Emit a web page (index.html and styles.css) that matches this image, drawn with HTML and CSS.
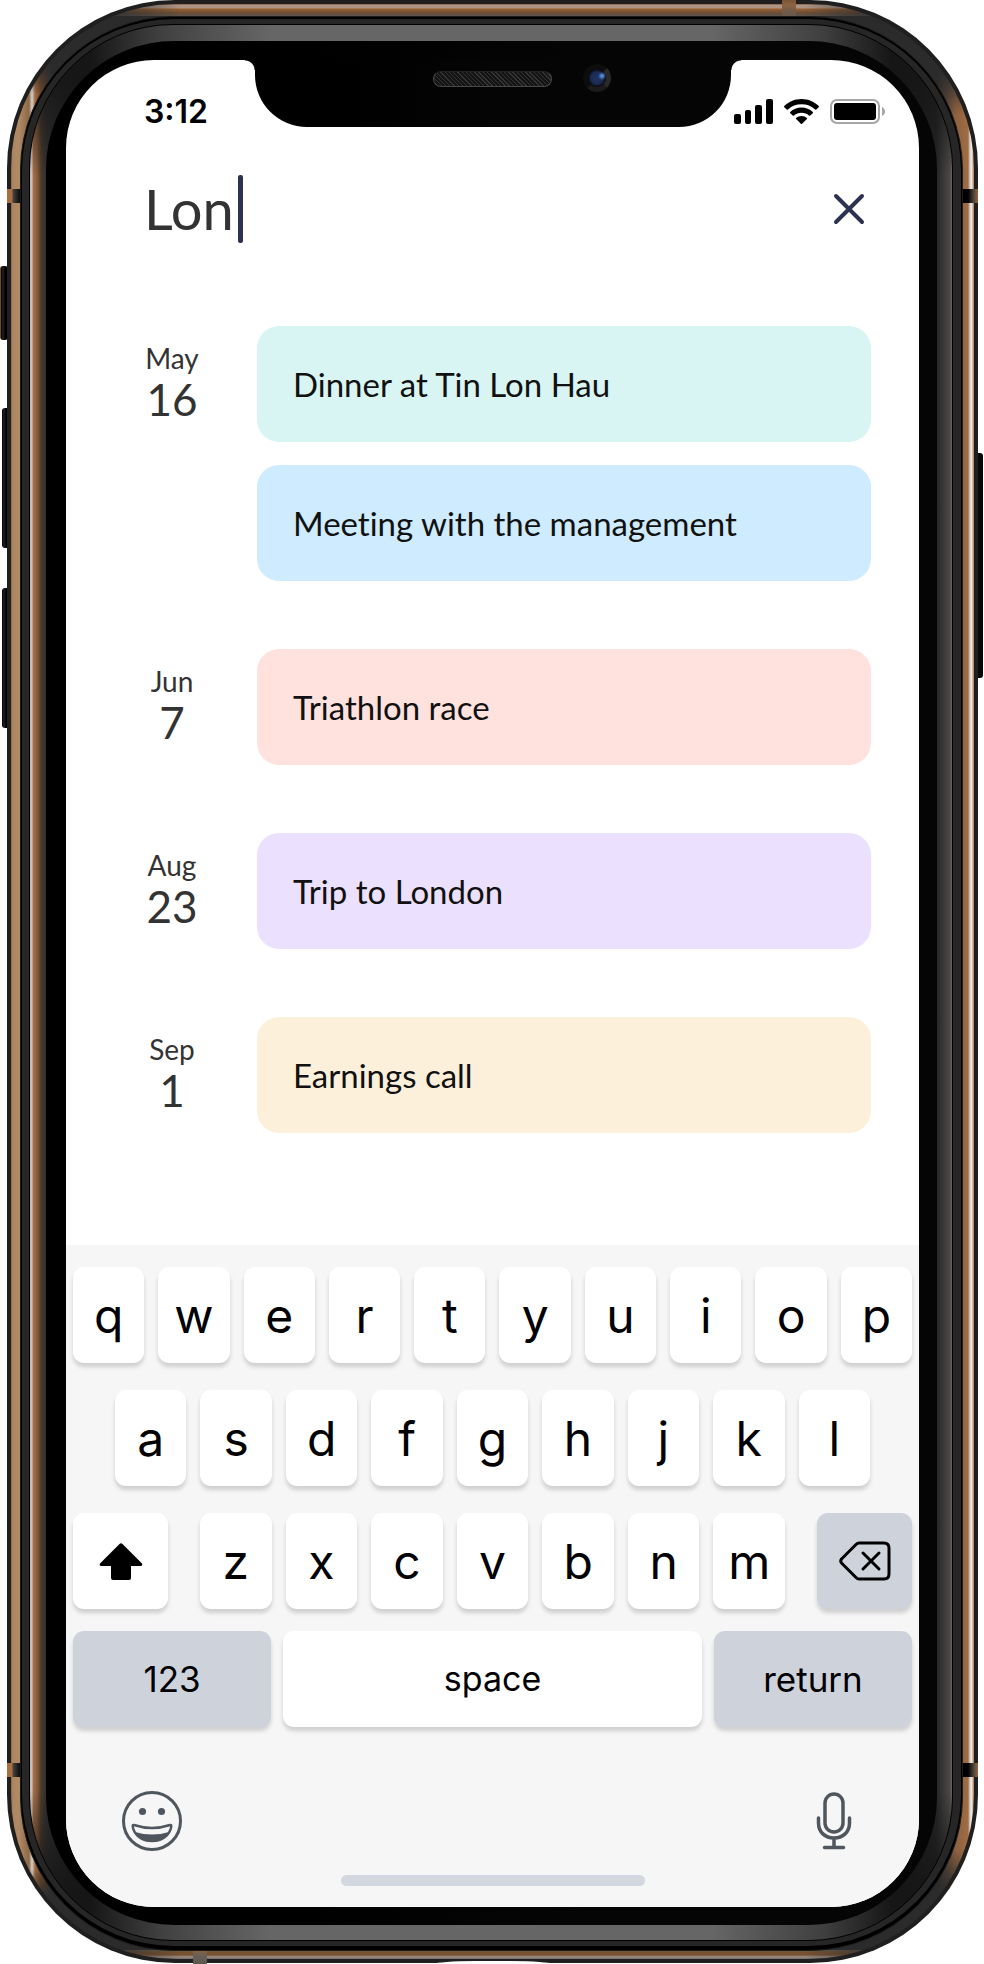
FILE: index.html
```
<!DOCTYPE html>
<html lang="en">
<head>
<meta charset="utf-8">
<meta name="viewport" content="width=device-width, initial-scale=1">
<title>Event search</title>
<link rel="stylesheet" href="styles.css">
</head>
<body>
<div class="phone">
  <div class="shell" aria-hidden="true">
    <span class="side-button mute"></span>
    <span class="side-button volume-up"></span>
    <span class="side-button volume-down"></span>
    <span class="side-button power"></span>
    <span class="ring edge"></span>
    <span class="ring metal"></span>
    <span class="band left upper"></span>
    <span class="band left lower"></span>
    <span class="band right upper"></span>
    <span class="band right lower"></span>
    <span class="band top"></span>
    <span class="band bottom"></span>
    <span class="ring gasket"></span>
    <span class="ring gasket-inner"></span>
    <span class="ring bevel"></span>
    <span class="ring glass"></span>
    <span class="port"></span>
  </div>

  <div class="screen">
    <header class="status">
      <time class="clock">3:12</time>
      <div class="notch">
        <span class="speaker"></span>
        <span class="camera"></span>
      </div>
      <div class="indicators">
        <svg width="39" height="25" viewBox="0 0 39 25" aria-label="Signal"><rect x="0" y="15" width="7" height="10" rx="2"/><rect x="11" y="11" width="6" height="14" rx="2"/><rect x="21" y="6" width="7" height="19" rx="2"/><rect x="32" y="0" width="7" height="25" rx="2"/></svg>
        <svg width="35" height="25" viewBox="0 0 35 25" aria-label="Wi-Fi"><path d="M17.500 0C24.500 0 30.500 2.800 34.700 7.100Q35.200 7.700 34.700 8.300L32.300 10.400Q31.700 10.900 31.100 10.400C27.500 7 22.800 5.200 17.500 5.200S7.500 7 3.900 10.400Q3.300 10.900 2.700 10.400L.3 8.300Q-.2 7.700 .3 7.100C4.500 2.800 10.500 0 17.500 0Z"/><path d="M17.500 8.600C22 8.600 25.800 10.200 28.800 13Q29.300 13.600 28.800 14.200L26.200 16.500Q25.600 17 25 16.500C22.900 14.700 20.400 13.700 17.500 13.700S12.100 14.700 10 16.500Q9.400 17 8.800 16.500L6.200 14.200Q5.700 13.600 6.200 13C9.200 10.200 13 8.600 17.500 8.600Z"/><path d="M17.500 17C19.700 17 21.500 17.700 22.900 19Q23.400 19.500 22.900 20.100L18.100 24.700Q17.500 25.200 16.900 24.700L12.100 20.100Q11.600 19.500 12.100 19C13.500 17.700 15.300 17 17.500 17Z"/></svg>
        <svg width="56" height="25" viewBox="0 0 56 25" aria-label="Battery"><rect x="1" y="1" width="48" height="23" rx="6" fill="none" stroke="#a6a6a6" stroke-width="2"/><rect x="4" y="4" width="42" height="17" rx="3"/><path d="M52 8Q55 9.500 55 12.500T52 17Z" fill="#a6a6a6"/></svg>
      </div>
    </header>

    <form class="search" onsubmit="return false">
      <input class="query" type="text" value="Lon" aria-label="Search events">
      <span class="caret"></span>
      <button class="clear" type="button" aria-label="Clear search">
        <svg width="32" height="32" viewBox="0 0 32 32"><path d="M3 3L29 29M29 3L3 29"/></svg>
      </button>
    </form>

    <main class="results">
      <section class="day">
        <time class="date"><span class="month">May</span><span class="number">16</span></time>
        <div class="events">
          <article class="event mint">Dinner at Tin Lon Hau</article>
          <article class="event sky">Meeting with the management</article>
        </div>
      </section>
      <section class="day">
        <time class="date"><span class="month">Jun</span><span class="number">7</span></time>
        <div class="events"><article class="event rose">Triathlon race</article></div>
      </section>
      <section class="day">
        <time class="date"><span class="month">Aug</span><span class="number">23</span></time>
        <div class="events"><article class="event violet">Trip to London</article></div>
      </section>
      <section class="day">
        <time class="date"><span class="month">Sep</span><span class="number">1</span></time>
        <div class="events"><article class="event sand">Earnings call</article></div>
      </section>
    </main>

    <footer class="keyboard">
      <div class="keys">
        <button class="key">q</button><button class="key">w</button><button class="key">e</button><button class="key">r</button><button class="key">t</button><button class="key">y</button><button class="key">u</button><button class="key">i</button><button class="key">o</button><button class="key">p</button>
      </div>
      <div class="keys inset">
        <button class="key">a</button><button class="key">s</button><button class="key">d</button><button class="key">f</button><button class="key">g</button><button class="key">h</button><button class="key">j</button><button class="key">k</button><button class="key">l</button>
      </div>
      <div class="keys spread">
        <button class="key side" aria-label="Shift"><svg width="44" height="37" viewBox="0 0 44 37"><path d="M20.500 .9Q22 -.4 23.500 .9L43 20.500Q44 23 41.500 23H32V35Q32 37 30 37H14Q12 37 12 35V23H2.500Q0 23 1 20.500Z"/></svg></button>
        <div class="keys letters">
          <button class="key">z</button><button class="key">x</button><button class="key">c</button><button class="key">v</button><button class="key">b</button><button class="key">n</button><button class="key">m</button>
        </div>
        <button class="key side grey" aria-label="Delete"><svg width="52" height="40" viewBox="0 0 52 40" fill="none" stroke="#000" stroke-width="3" stroke-linecap="round" stroke-linejoin="round"><path d="M20 2H45Q50 2 50 7V33Q50 38 45 38H20Q18.500 38 17 36.500L2.500 22Q1 20 2.500 18L17 3.500Q18.500 2 20 2Z"/><path d="M24 12L40 28M40 12L24 28"/></svg></button>
      </div>
      <div class="keys bottom-row">
        <button class="key word grey">123</button><button class="key word space">space</button><button class="key word grey">return</button>
      </div>
      <div class="tools">
        <button class="tool" aria-label="Emoji"><svg width="60" height="60" viewBox="0 0 60 60" fill="none" stroke="#50565e" stroke-width="3"><circle cx="30" cy="30" r="28.500"/><circle cx="20.500" cy="20.500" r="3.600" fill="#50565e" stroke="none"/><circle cx="39.500" cy="20.500" r="3.600" fill="#50565e" stroke="none"/><path stroke-width="2.400" stroke-linejoin="round" d="M12 34Q30 40 48 34Q49.500 33.500 49.300 35.500C48 44 40 50 30 50S12 44 10.700 35.500Q10.500 33.500 12 34Z"/><path d="M13 41Q30 46 47 41C43 48.500 37 51 30 51S17 48.500 13 41Z" fill="#50565e" stroke="none"/></svg></button>
        <button class="tool" aria-label="Dictate"><svg width="36" height="58" viewBox="0 0 36 58" fill="none" stroke="#50565e" stroke-width="3.500" stroke-linecap="round"><rect x="9" y="2" width="18" height="38" rx="9"/><path d="M2.500 26V31C2.500 40 9 46 18 46S33.500 40 33.500 31V26M18 46V55M8.500 55.500H27.500"/></svg></button>
      </div>
      <div class="home-bar"></div>
    </footer>
  </div>
</div>
</body>
</html>
```
FILE: styles.css
```
* { box-sizing: border-box; }

body { margin: 0; background: #fff; }

button, input { font: inherit; color: inherit; border: 0; padding: 0; background: none; }

.phone {
  position: relative;
  display: flex;
  min-height: 100vh;
  padding: 60px 65px 57px 66px;
  font-family: Lato, "Open Sans", sans-serif;
  font-variant-ligatures: none;
}

/* Device body: concentric rounded layers behind the screen */
.shell { position: absolute; inset: 0; overflow: hidden; }
.ring, .band, .side-button, .port { position: absolute; }
.edge { inset: 0 6px 1px 7px; border-radius: 168px; background: #1f1f1f; }
.metal {
  inset: 4px 10px 5px 11px;
  border-radius: 164px;
  background:
    linear-gradient(#2b2b2b 58px, transparent 90px, transparent calc(100% - 90px), #2b2b2b calc(100% - 58px)) left / 40px 100% no-repeat,
    linear-gradient(#2b2b2b 66px, transparent 110px, transparent calc(100% - 110px), #2b2b2b calc(100% - 66px)) right / 36px 100% no-repeat,
    linear-gradient(90deg, #8d6c4f 0, #af8561 2px, #b08a66 8px, #8d6846 18px, #d8d0cc 21px, #a06b42 24px, #6b4528 30px, #333 40px) left center / 40px calc(100% - 116px) no-repeat,
    linear-gradient(270deg, #b48c68 0, #b48c68 1px, #eee 2px, #d8d4d0 4px, #a06c42 6px, #8f6140 18px, #333 36px) right center / 36px calc(100% - 132px) no-repeat,
    linear-gradient(90deg, #2b2b2b 80px, transparent 170px, transparent calc(100% - 170px), #2b2b2b calc(100% - 80px)),
    linear-gradient(#7b4f2c 0, #ad9485 1px, #ad9485 4px, #99602f 5px, #6b4d36 9px, #5b5550 12px) top / 100% 12px no-repeat,
    linear-gradient(0deg, #6d6661 0, #9d9189 2px, #7a5233 4px, #76512f 7px, #6a625a 9px) bottom / 100% 9px no-repeat,
    #2b2b2b;
}
.gasket { inset: 16px 21px 13px 20px; border-radius: 154px; background: #000; border: 1px solid #1c1c1c; }
.gasket-inner { inset: 19px 23px 18px 22px; border-radius: 152px; background: #262626; }
.bevel {
  inset: 24px 31px 23px 29px;
  border: 1px solid #000;
  border-radius: 144px;
  background:
    linear-gradient(#161616 40px, transparent 150px, transparent calc(100% - 150px), #161616 calc(100% - 40px)) left / 60px 100% no-repeat,
    linear-gradient(#161616 40px, transparent 150px, transparent calc(100% - 150px), #161616 calc(100% - 40px)) right / 60px 100% no-repeat,
    linear-gradient(90deg, #bcb0a9 0, #d4cac4 2px, #a8714a 3px, #8a5e3b 7px, #4c3b2c 11px, #303030 16px, #161616 50px) left center / 50px calc(100% - 80px) no-repeat,
    linear-gradient(270deg, #6c685f 0, #4c4a46 2px, #393836 9px, #242424 16px, #161616 50px) right center / 50px calc(100% - 80px) no-repeat,
    linear-gradient(90deg, #161616 60px, #404040 130px, #666 240px, #666 calc(100% - 240px), #404040 calc(100% - 130px), #161616 calc(100% - 60px));
}
.glass { inset: 41px 47px 39px 46px; border-radius: 128px; background: linear-gradient(90deg, #000 30%, #050505 60%); }
.band.left { left: 7px; width: 13px; height: 14px; background: linear-gradient(90deg, #a8703f 0, #a8703f 5px, #444 6px, #0a0a0a 13px); }
.band.right { right: 6px; width: 15px; height: 14px; background: linear-gradient(270deg, #9a6238 0, #514840 4px, #000 10px); }
.band.upper { top: 189px; }
.band.lower { bottom: 187px; }
.band.top { top: 0; right: 188px; width: 14px; height: 16px; background: linear-gradient(#7b5434 0, #8b6344 5px, #6e5a4a 12px); }
.band.bottom { bottom: 0; left: 193px; width: 14px; height: 14px; background: linear-gradient(0deg, #5d5650 0, #6b6058 9px, #8d6139 14px); }
.side-button { left: 2px; width: 8px; height: 140px; border-radius: 3px; background: linear-gradient(90deg, #000 0, #222 2px, #000 4px); }
.mute { top: 266px; left: 0; height: 74px; border-left: 1px solid #6f4a22; }
.volume-up { top: 408px; }
.volume-down { top: 588px; }
.power { left: auto; right: 1px; top: 453px; height: 225px; background: #080808; }
.port { bottom: 0; left: calc(50% - 57px); width: 116px; height: 3px; border-radius: 40px 40px 0 0 / 3px 3px 0 0; background: #fff; }

.screen {
  position: relative;
  display: flex;
  flex: 1;
  flex-direction: column;
  min-width: 0;
  overflow: hidden;
  border-radius: 88px;
  background: #fff;
}

/* Status bar */
.status { display: grid; grid-template-columns: 1fr 476px 1fr; align-items: end; }
.clock { padding-left: 78px; font: 600 32px/30px Inter, sans-serif; color: #000; }
.notch {
  position: relative;
  display: flex;
  align-items: flex-start;
  justify-content: center;
  height: 67px;
  border-radius: 0 0 52px 52px;
  background: linear-gradient(90deg, #000 20%, #050505 50%);
}
.notch::before, .notch::after { content: ""; position: absolute; top: 0; width: 10px; height: 10px; }
.notch::before { right: 100%; background: radial-gradient(circle at 0 100%, transparent 9px, #000 10px); }
.notch::after { left: 100%; background: radial-gradient(circle at 100% 100%, transparent 9px, #050505 10px); }
.speaker {
  width: 119px;
  height: 16px;
  margin-top: 11px;
  border: 1px solid #484848;
  border-top-color: #222;
  border-radius: 8px;
  background: repeating-linear-gradient(45deg, #141414 0, #141414 2px, #343434 2px, #343434 3px);
}
.camera {
  position: absolute;
  top: 4px;
  left: 328px;
  width: 28px;
  height: 28px;
  border: 5px solid #0d0d0d;
  border-right-color: #2b2927;
  border-bottom-color: #1c1b1a;
  border-radius: 50%;
  background: radial-gradient(circle at 14px 7px, #6aa0e8 0, #3c68b0 2px, transparent 4px), radial-gradient(circle, #20345f 0, #1b2b52 6px, #05070c 9px);
}
.indicators { display: flex; align-items: end; justify-content: flex-end; gap: 11px; padding: 0 33px 3px 0; }

/* Search field */
.search { display: flex; align-items: center; height: 68px; margin: 48px 54px 0 78px; color: #333; }
.query { field-sizing: content; min-width: 24px; height: 68px; font-size: 56px; line-height: 68px; outline: 0; }
.caret { width: 5px; height: 68px; margin-left: 4px; border-radius: 2px; background: #2d3250; }
.clear { display: flex; margin-left: auto; cursor: pointer; }
.clear path { fill: none; stroke: #2d3250; stroke-width: 4; stroke-linecap: round; }

/* Results */
.results { display: grid; gap: 68px; padding: 83px 48px 112px 64px; }
.day { display: grid; grid-template-columns: 84px 1fr; column-gap: 43px; align-items: start; }
.date { display: flex; flex-direction: column; padding-top: 16px; color: #333; text-align: center; }
.month { font-size: 28px; line-height: 32px; }
.number { font-size: 44px; line-height: 50px; }
.events { display: grid; gap: 23px; }
.event {
  display: flex;
  align-items: center;
  height: 116px;
  padding: 0 36px;
  border-radius: 22px;
  font-size: 33px;
  line-height: 40px;
  color: #111;
}
.mint { background: #d9f5f3; }
.sky { background: #ceebff; }
.rose { background: #ffe1de; }
.violet { background: #ebe1ff; }
.sand { background: #fdf0db; }

/* Keyboard */
.keyboard { flex: 1; padding: 22px 7px 20px; background: #f6f6f6; font-family: Inter, sans-serif; color: #000; }
.keys { display: flex; gap: 14px; margin-bottom: 27px; }
.inset { padding: 0 42px; }
.spread { gap: 32px; margin-bottom: 22px; }
.letters { flex: 1; margin: 0; }
.key {
  display: flex;
  flex: 1;
  align-items: center;
  justify-content: center;
  min-width: 0;
  height: 96px;
  padding-top: 2px;
  border-radius: 11px;
  background: #fff;
  box-shadow: 0 4px 4px rgba(0, 0, 0, .16);
  font-size: 48px;
  line-height: 56px;
}
.side { flex: 0 0 95px; padding: 0; }
.grey { background: #ced2db; }
.bottom-row { gap: 12px; margin: 0; }
.word { flex: 0 0 198px; padding: 0; font-size: 35px; }
.space { flex: 1; font-size: 34px; }
.tools { display: flex; align-items: center; justify-content: space-between; padding: 64px 60px 24px 49px; }
.tool { display: flex; }
.home-bar { width: 304px; height: 11px; margin: 0 auto; border-radius: 6px; background: #d3d7e0; }
```
